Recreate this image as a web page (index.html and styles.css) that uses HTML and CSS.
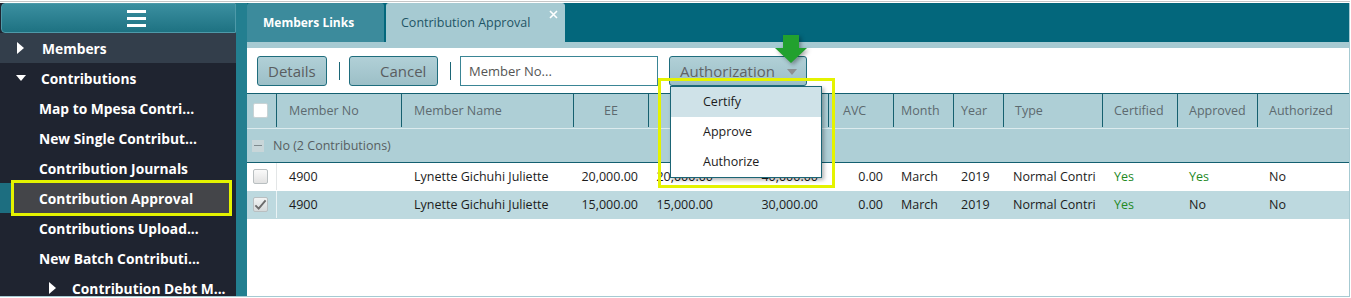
FILE: index.html
```html
<!DOCTYPE html>
<html lang="en">
<head>
<meta charset="utf-8">
<title>Contribution Approval</title>
<link rel="stylesheet" href="styles.css">
</head>
<body>
<div class="app">
  <aside class="sidebar">
    <div class="side-head">
      <svg class="burger" width="19" height="17" viewBox="0 0 19 17"><rect x="0" y="0" width="19" height="3" fill="#fff"/><rect x="0" y="7" width="19" height="3" fill="#fff"/><rect x="0" y="14" width="19" height="3" fill="#fff"/></svg>
    </div>
    <div class="nav-item top members"><span class="tri tri-right"></span><span>Members</span></div>
    <div class="nav-item top"><span class="tri tri-down"></span><span>Contributions</span></div>
    <div class="nav-item sub">Map to Mpesa Contri...</div>
    <div class="nav-item sub">New Single Contribut...</div>
    <div class="nav-item sub">Contribution Journals</div>
    <div class="nav-item selected"><span class="sel-box">Contribution Approval</span></div>
    <div class="nav-item sub">Contributions Upload...</div>
    <div class="nav-item sub">New Batch Contributi...</div>
    <div class="nav-item subsub"><span class="tri tri-right"></span><span>Contribution Debt M...</span></div>
  </aside>
  <div class="gutter"></div>
  <main class="main">
    <div class="tabs">
      <div class="tab tab-links">Members Links</div>
      <div class="tab tab-active">Contribution Approval
        <svg class="tab-close" width="9" height="9" viewBox="0 0 9 9"><path d="M1 1 L8 8 M8 1 L1 8" stroke="#fff" stroke-width="1.6"/></svg>
      </div>
    </div>
    <div class="tab-strip"></div>
    <div class="toolbar">
      <button class="btn btn-details">Details</button>
      <span class="sep"></span>
      <button class="btn btn-cancel">Cancel</button>
      <span class="sep"></span>
      <div class="search">Member No...</div>
      <button class="btn btn-auth">Authorization<span class="caret"></span></button>
    </div>
    <div class="grid">
      <div class="row head">
        <div class="c chk"><span class="box box-white"></span></div>
        <div class="c">Member No</div>
        <div class="c">Member Name</div>
        <div class="c center">EE</div>
        <div class="c center">ER</div>
        <div class="c center">Total</div>
        <div class="c avc">AVC</div>
        <div class="c tight">Month</div>
        <div class="c tight">Year</div>
        <div class="c">Type</div>
        <div class="c">Certified</div>
        <div class="c">Approved</div>
        <div class="c last">Authorized</div>
      </div>
      <div class="group">
        <span class="minus"></span>
        <span>No (2 Contributions)</span>
      </div>
      <div class="row data">
        <div class="c chk"><span class="box"></span></div>
        <div class="c">4900</div>
        <div class="c">Lynette Gichuhi Juliette</div>
        <div class="c num">20,000.00</div>
        <div class="c num">20,000.00</div>
        <div class="c num">40,000.00</div>
        <div class="c num">0.00</div>
        <div class="c tight">March</div>
        <div class="c tight">2019</div>
        <div class="c clip">Normal Contri</div>
        <div class="c yes">Yes</div>
        <div class="c yes">Yes</div>
        <div class="c">No</div>
      </div>
      <div class="row data alt">
        <div class="c chk"><span class="box checked"><svg width="14" height="12" viewBox="0 0 14 12"><path d="M1.5 6.5 L5 10 L12.5 1" fill="none" stroke="#6b6b6b" stroke-width="2"/></svg></span></div>
        <div class="c">4900</div>
        <div class="c">Lynette Gichuhi Juliette</div>
        <div class="c num">15,000.00</div>
        <div class="c num">15,000.00</div>
        <div class="c num">30,000.00</div>
        <div class="c num">0.00</div>
        <div class="c tight">March</div>
        <div class="c tight">2019</div>
        <div class="c clip">Normal Contri</div>
        <div class="c yes">Yes</div>
        <div class="c">No</div>
        <div class="c">No</div>
      </div>
    </div>

    <svg class="green-arrow" width="34" height="31" viewBox="0 0 34 31"><polygon points="9,1 25,1 25,14 33,14 17,29 1,14 9,14" fill="#22a12e"/></svg>

    <div class="menu">
      <div class="menu-item hover">Certify</div>
      <div class="menu-item">Approve</div>
      <div class="menu-item">Authorize</div>
    </div>
    <div class="annot"></div>
  </main>
</div>
</body>
</html>
```

FILE: styles.css
```css
* { box-sizing: border-box; }

body {
  margin: 0;
  background: #fff;
  font-family: "Open Sans", "Liberation Sans", sans-serif;
}

.app {
  display: flex;
  width: 1350px;
  height: 296px;
  margin-top: 1px;
  border-top: 1px solid #c6c6c6;
  padding-top: 1px;
  border-bottom: 1px solid #a6cad2;
}

/* ---------- sidebar ---------- */
.sidebar {
  width: 236px;
  flex: none;
  background: #1f2430;
  overflow: hidden;
}

.side-head {
  height: 30px;
  display: flex;
  align-items: center;
  justify-content: center;
  padding-left: 35px;
  background: linear-gradient(#3b8fa0, #1e7282);
  border: 1px solid #4e9aa9;
  border-radius: 4px 0 0 4px;
  margin-left: 1px;
}

.nav-item {
  height: 30px;
  display: flex;
  align-items: center;
  color: #fff;
  font-size: 13.8px;
  font-weight: 700;
  white-space: nowrap;
}

.nav-item.top { padding-left: 16px; }
.nav-item.members { background: #333e4b; }
.nav-item.sub { padding-left: 39px; }
.nav-item.subsub { padding-left: 49px; }

.tri {
  display: inline-block;
  width: 0;
  height: 0;
  flex: none;
}
.tri-right {
  border-left: 7px solid #fff;
  border-top: 6px solid transparent;
  border-bottom: 6px solid transparent;
  margin-left: 1px;
  margin-right: 18px;
}
.tri-down {
  border-top: 6px solid #fff;
  border-left: 5.5px solid transparent;
  border-right: 5.5px solid transparent;
  margin-right: 15px;
}
.subsub .tri-right { margin-left: 0; margin-right: 16px; }

.nav-item.selected {
  padding-left: 14px;
  padding-right: 7px;
  background: linear-gradient(to right, #1d6e80 11px, #1f2430 11px);
}
.sel-box {
  flex: 1;
  height: 30px;
  display: flex;
  align-items: center;
  padding-left: 25px;
  background: #444549;
  outline: 3px solid #e4f300;
}

.gutter {
  width: 11px;
  flex: none;
  background: #237f90;
}

/* ---------- main ---------- */
.main {
  flex: 1;
  position: relative;
  display: flex;
  flex-direction: column;
  border-right: 1px solid #a6cad2;
  min-width: 0;
}

.tabs {
  height: 39px;
  display: flex;
  gap: 2px;
  background: #03677c;
}
.tab {
  display: flex;
  align-items: center;
  white-space: nowrap;
}
.tab-links {
  width: 137px;
  padding-left: 16px;
  background: #3c8b9c;
  border-radius: 3px 3px 0 0;
  color: #fff;
  font-size: 12px;
  font-weight: 700;
}
.tab-active {
  position: relative;
  width: 179px;
  padding-left: 15px;
  background: #a6cad2;
  color: #1f5566;
  font-size: 12.5px;
  border-radius: 3px 3px 0 0;
}
.tab-close {
  position: absolute;
  right: 7px;
  top: 7px;
}

.tab-strip {
  height: 6px;
  background: #a6cad2;
}

.toolbar {
  height: 45px;
  display: flex;
  align-items: flex-start;
  padding: 8px 0 0 10px;
}

.btn {
  height: 30px;
  border: 1px solid #1f6d7d;
  border-radius: 3px;
  background: linear-gradient(#b1d0d7, #9cbfc7);
  color: #5a5d5f;
  font-family: inherit;
  font-size: 15px;
  padding: 0;
  display: flex;
  align-items: center;
  flex: none;
}
.btn-details { width: 70px; padding-left: 10px; }
.btn-cancel { width: 89px; padding-left: 30px; }
.btn-auth {
  width: 138px;
  padding-left: 10px;
  margin-left: 11px;
  color: #606366;
}
.caret {
  width: 0;
  height: 0;
  border-top: 6px solid #8c8f91;
  border-left: 5px solid transparent;
  border-right: 5px solid transparent;
  margin-left: 12px;
  margin-top: 2px;
}

.sep {
  width: 1px;
  height: 18px;
  margin: 6px 9px 0 12px;
  background: #1c6676;
  flex: none;
}

.search {
  width: 198px;
  height: 30px;
  border: 1px solid #3a8595;
  display: flex;
  align-items: center;
  padding-left: 8px;
  font-size: 13px;
  color: #555;
}

/* ---------- grid ---------- */
.grid {
  display: flex;
  flex-direction: column;
}
.row {
  display: grid;
  grid-template-columns: 30px 125px 172px 75px 75px 105px 65px 60px 50px 99px 75px 80px 1fr;
}
.c {
  display: flex;
  align-items: center;
  padding-left: 11px;
  white-space: nowrap;
  overflow: hidden;
  min-width: 0;
}
.head {
  height: 36px;
  border-top: 1px solid #135f70;
  border-bottom: 1px solid #dcebee;
  background: #aecfd6;
  color: #5d6a6f;
  font-size: 12.5px;
  padding-bottom: 1px;
}
.head .c { border-right: 1px solid #16606f; }
.head .c.last { border-right: none; }
.head .c:nth-child(2),
.head .c:nth-child(3) { padding-left: 12px; }
.head .center { justify-content: center; padding-left: 0; }
.head .avc { padding-left: 14px; }
.tight { padding-left: 7px; }
.head .tight { padding-left: 7px; }

.c.chk { padding-left: 6px; }
.data .c.chk { border-right: 1px solid #e3e6e7; }
.alt .c.chk { border-right-color: #eaf3f5; }

.box {
  width: 15px;
  height: 15px;
  border: 1px solid #b9bfc1;
  border-radius: 2px;
  background: linear-gradient(#fafafa, #e2e2e2);
  display: flex;
  align-items: center;
  justify-content: center;
}
.box-white { background: #fff; border-color: #c9d3d5; }
.box.checked { background: linear-gradient(#f2f4f4, #d6dadb); }

.group {
  height: 34px;
  display: flex;
  align-items: center;
  padding-left: 5px;
  background: #aecfd6;
  border-bottom: 1px solid #135f70;
  color: #585f62;
  font-size: 12.5px;
}
.minus {
  width: 12px;
  height: 12px;
  margin-right: 9px;
  background: #c8d6d9 linear-gradient(#7e8a8e, #7e8a8e) center / 8px 1px no-repeat;
}

.data {
  height: 28px;
  background: #fff;
  color: #1c1c1c;
  font-size: 12.5px;
  padding-bottom: 1px;
}
.data .c:nth-child(2),
.data .c:nth-child(3) { padding-left: 12px; }
.data.alt { background: #bdd9df; }
.data .num { justify-content: flex-end; padding-left: 0; padding-right: 11px; }
.data .clip { padding-left: 9px; padding-right: 5px; }
.yes { color: #23891f; }

/* ---------- overlays ---------- */
.green-arrow {
  position: absolute;
  left: 527px;
  top: 31px;
  filter: drop-shadow(2px 2px 2px rgba(0, 0, 0, 0.35));
}

.menu {
  position: absolute;
  left: 423px;
  top: 83px;
  width: 152px;
  border: 1px solid #1b6575;
  background: #fff;
  box-shadow: 2px 2px 4px rgba(0, 0, 0, 0.3);
}
.menu-item {
  height: 30px;
  display: flex;
  align-items: center;
  padding-left: 32px;
  font-size: 12.5px;
  color: #1c1c1c;
  padding-bottom: 1px;
}
.menu-item.hover { background: #cfe2e8; }

.annot {
  position: absolute;
  left: 411px;
  top: 75px;
  width: 177px;
  height: 110px;
  border: 3px solid #e4f300;
}
```
